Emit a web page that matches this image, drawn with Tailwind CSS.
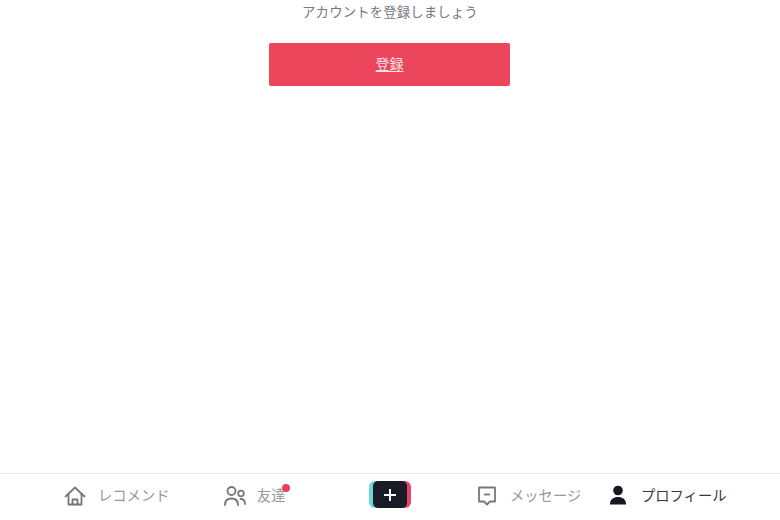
<!DOCTYPE html>
<html lang="ja">
<head>
    <meta charset="UTF-8">
    <title>プロフィール</title>
    <script src="https://cdn.jsdelivr.net/npm/@tailwindcss/browser@4"></script>
</head>
<body class="bg-white font-['Noto_Sans_CJK_JP','Noto_Sans',sans-serif]">
    <div class="h-[520px] w-[780px] flex flex-col overflow-hidden">
        <main class="flex-1 flex flex-col items-center">
            <p class="pt-[1px] h-[43px] text-[13.4px] leading-[21px] tracking-[0.01em] text-[#77787c] whitespace-nowrap">アカウントを登録しましょう</p>
            <a class="mr-[1px] w-[241px] h-[43px] pb-[3px] flex items-center justify-center rounded-[2px] bg-[#ec465c] text-[#fbe3e6] text-[14px] underline underline-offset-2">登録</a>
        </main>

        <nav class="h-[47px] border-t border-[#e9e9e9] flex items-start pt-[6px] text-[14.3px] leading-[30px] text-[#97979a] whitespace-nowrap">
            <div class="w-[64px]"></div>
            <svg class="w-[22px] h-[22px] mt-[5px]" viewBox="0 0 22 22" fill="none" stroke="#77777a" stroke-width="1.800" stroke-linejoin="round" stroke-linecap="round">
                <path d="M1.500 11.500 11 2.500 20.500 11.500"/>
                <path d="M4.500 9v10.500h13V9"/>
                <path d="M8.500 19.500v-5h5v5"/>
            </svg>
            <span class="ml-[12px] w-[71px]">レコメンド</span>

            <svg class="ml-[55px] w-[22px] h-[22px] mt-[5px]" viewBox="0 0 22 22" fill="none" stroke="#77777a" stroke-width="1.800" stroke-linecap="round">
                <circle cx="7.500" cy="6" r="4"/>
                <circle cx="17" cy="8.500" r="2.800"/>
                <path d="M1 20c0-4.500 3-6.500 6.500-6.500s6.500 2 6.500 6.500"/>
                <path d="M16.500 14c2.800 0 4.500 1.800 4.500 5"/>
            </svg>
            <div class="relative ml-[11px] w-[29px]">
                <span>友達</span>
                <span class="absolute right-[-4px] top-[4px] w-[8px] h-[8px] rounded-full bg-[#ee3f58]"></span>
            </div>

            <div class="relative ml-[83px] w-[42px] h-[27px] mt-[1px]">
                <div class="absolute left-0 top-0 w-[34px] h-[27px] rounded-[6px] bg-[#6fd3de]"></div>
                <div class="absolute right-0 top-0 w-[34px] h-[27px] rounded-[6px] bg-[#e8436a]"></div>
                <div class="absolute left-[4px] top-0 w-[34px] h-[27px] rounded-[5px] bg-[#191b26] flex items-center justify-center">
                    <svg class="w-[14px] h-[14px]" viewBox="0 0 14 14" stroke="#fff" stroke-width="2"><path d="M7 1v12M1 7h12"/></svg>
                </div>
            </div>

            <svg class="ml-[66px] w-[20px] h-[22px] mt-[5px]" viewBox="0 0 20 22" fill="none" stroke="#77777a" stroke-width="1.800" stroke-linejoin="round">
                <path d="M2 2.500h16v14h-5l-3 3-3-3H2z"/>
                <path d="M7 9.500h6"/>
            </svg>
            <span class="ml-[13px] w-[73px]">メッセージ</span>

            <svg class="ml-[26px] w-[18px] h-[20px] mt-[5px]" viewBox="0 0 18 20" fill="#161823">
                <circle cx="9" cy="5.500" r="4.800"/>
                <path d="M1 19c0-4.500 3.500-7 8-7s8 2.500 8 7v.5H1z"/>
            </svg>
            <span class="ml-[14px] text-[#38393d]">プロフィール</span>
        </nav>
    </div>
</body>
</html>
